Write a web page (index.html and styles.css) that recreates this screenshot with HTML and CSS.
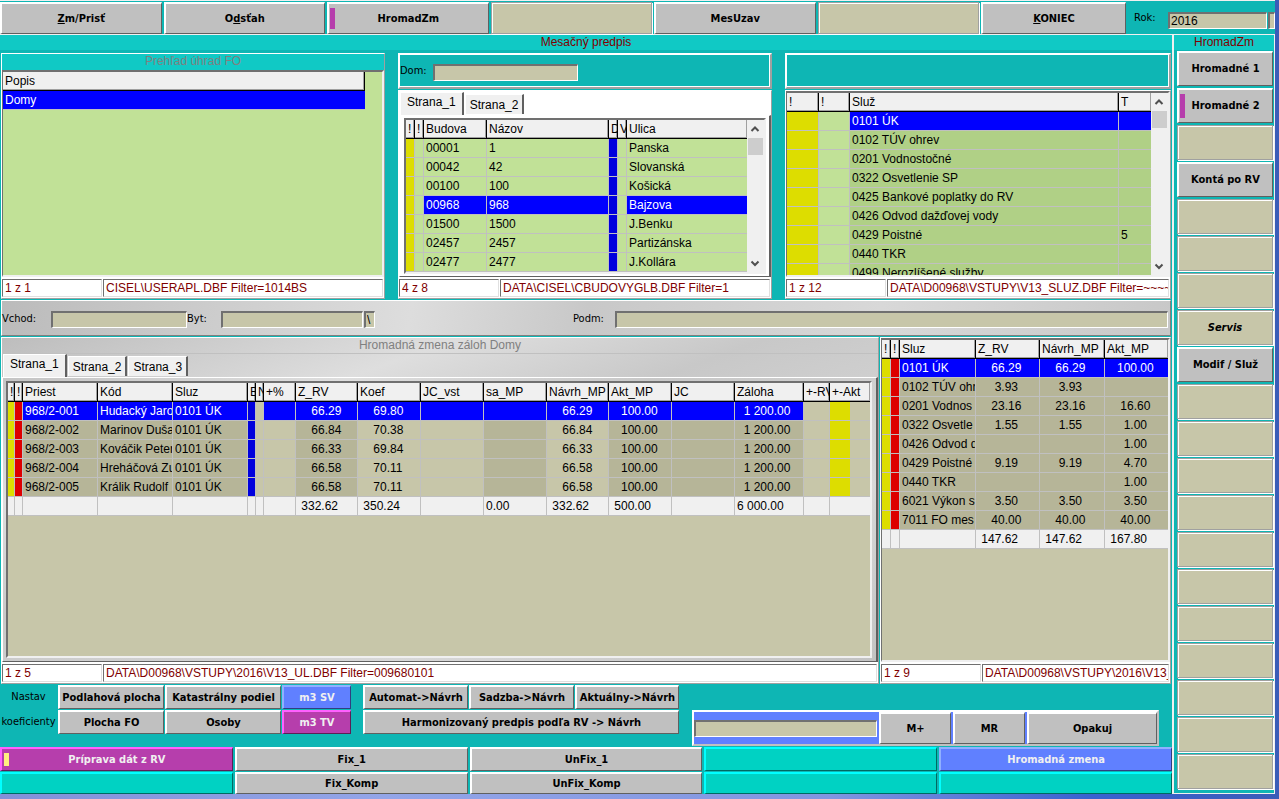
FILE: index.html
```html
<!DOCTYPE html>
<html lang="sk">
<head>
<meta charset="utf-8">
<title>Mesačný predpis</title>
<link rel="stylesheet" href="styles.css">
</head>
<body>
<div class="app">
  <header class="topbar">
    <nav class="menu">
      <button class="btn"><span><u>Z</u>m/Prisť</span></button>
      <button class="btn"><span>O<u>d</u>sťah</span></button>
      <button class="btn marked">HromadZm</button>
      <button class="slot" aria-label="Voľné"></button>
      <button class="btn">MesUzav</button>
      <button class="slot" aria-label="Voľné"></button>
    </nav>
    <button class="btn quit"><span><u>K</u>ONIEC</span></button>
    <div class="year">
      <label for="rok">Rok:</label>
      <input id="rok" class="field" value="2016">
      <input class="field tiny" aria-label="Mesiac">
    </div>
  </header>

  <main class="main">
    <h1 class="title">Mesačný predpis</h1>
    <div class="upper">
      <section class="panel teal-panel">
        <h2 class="caption teal">Prehľad úhrad FO</h2>
        <div class="grid green">
          <table class="t-popis">
            <thead><tr><th>Popis</th></tr></thead>
            <tbody><tr class="sel"><td>Domy</td></tr></tbody>
          </table>
        </div>
        <div class="status"><span>1 z 1</span><span>CISEL\USERAPL.DBF Filter=1014BS</span></div>
      </section>

      <section class="stack">
        <div class="box"><label for="dom">Dom:</label><input id="dom" class="field"></div>
        <div class="panel">
          <div class="tabs white"><button class="tab on">Strana_1</button><button class="tab">Strana_2</button></div>
          <div class="page light">
            <div class="grid green">
              <div class="clip">
              <table class="t-bud">
                <colgroup><col class="w9"><col class="w9"><col class="w63"><col class="w122"><col class="w9"><col class="w9"><col></colgroup>
                <thead><tr><th>!</th><th>!</th><th>Budova</th><th>Názov</th><th>D</th><th>V</th><th>Ulica</th></tr></thead>
                <tbody>
                  <tr><td class="y"></td><td></td><td>00001</td><td>1</td><td class="b"></td><td></td><td>Panska</td></tr>
                  <tr><td class="y"></td><td></td><td>00042</td><td>42</td><td class="b"></td><td></td><td>Slovanská</td></tr>
                  <tr><td class="y"></td><td></td><td>00100</td><td>100</td><td class="b"></td><td></td><td>Košická</td></tr>
                  <tr class="sel"><td class="y"></td><td class="n"></td><td>00968</td><td>968</td><td class="b"></td><td class="n"></td><td>Bajzova</td></tr>
                  <tr><td class="y"></td><td></td><td>01500</td><td>1500</td><td class="b"></td><td></td><td>J.Benku</td></tr>
                  <tr><td class="y"></td><td></td><td>02457</td><td>2457</td><td class="b"></td><td></td><td>Partizánska</td></tr>
                  <tr><td class="y"></td><td></td><td>02477</td><td>2477</td><td class="b"></td><td></td><td>J.Kollára</td></tr>
                </tbody>
              </table>
              </div>
              <div class="scroll">
                <svg viewBox="0 0 16 18"><path d="M4.500 11 8 7.500 11.500 11"/></svg><i></i>
                <svg viewBox="0 0 16 18"><path d="M4.500 7.500 8 11 11.500 7.500"/></svg>
              </div>
            </div>
          </div>
          <div class="status"><span>4 z 8</span><span>DATA\CISEL\CBUDOVYGLB.DBF Filter=1</span></div>
        </div>
      </section>

      <section class="stack">
        <div class="box"></div>
        <div class="panel">
          <div class="grid green">
            <div class="clip">
            <table class="t-sluz">
              <colgroup><col class="w32"><col class="w31"><col class="w269"><col></colgroup>
              <thead><tr><th>!</th><th>!</th><th>Služ</th><th>T</th></tr></thead>
              <tbody>
                <tr class="sel"><td class="y"></td><td class="n"></td><td>0101 ÚK</td><td></td></tr>
                <tr><td class="y"></td><td></td><td class="d">0102 TÚV ohrev</td><td class="d"></td></tr>
                <tr><td class="y"></td><td></td><td class="d">0201 Vodnostočné</td><td class="d"></td></tr>
                <tr><td class="y"></td><td></td><td class="d">0322 Osvetlenie SP</td><td class="d"></td></tr>
                <tr><td class="y"></td><td></td><td class="d">0425 Bankové poplatky do RV</td><td class="d"></td></tr>
                <tr><td class="y"></td><td></td><td class="d">0426 Odvod dažďovej vody</td><td class="d"></td></tr>
                <tr><td class="y"></td><td></td><td class="d">0429 Poistné</td><td class="d">5</td></tr>
                <tr><td class="y"></td><td></td><td class="d">0440 TKR</td><td class="d"></td></tr>
                <tr><td class="y"></td><td></td><td class="d">0499 Nerozlíšené služby</td><td class="d"></td></tr>
              </tbody>
            </table>
            </div>
            <div class="scroll">
              <svg viewBox="0 0 16 18"><path d="M4.500 11 8 7.500 11.500 11"/></svg><i></i>
              <svg viewBox="0 0 16 18"><path d="M4.500 7.500 8 11 11.500 7.500"/></svg>
            </div>
          </div>
          <div class="status"><span>1 z 12</span><span>DATA\D00968\VSTUPY\V13_SLUZ.DBF Filter=~~~~</span></div>
        </div>
      </section>
    </div>

    <form class="filter">
      <label for="vchod">Vchod:</label><input id="vchod" class="field f-vchod">
      <label for="byt">Byt:</label><input id="byt" class="field f-byt">
      <input class="field f-sep" aria-label="Oddeľovač" value="\">
      <label for="podm">Podm:</label><input id="podm" class="field f-podm">
    </form>

    <div class="lower">
      <section class="panel grey">
        <h2 class="caption">Hromadná zmena záloh Domy</h2>
        <div class="tabs"><button class="tab on">Strana_1</button><button class="tab">Strana_2</button><button class="tab">Strana_3</button></div>
        <div class="page">
          <div class="grid tan">
            <table class="t-zal">
              <colgroup><col class="w7"><col class="w8"><col class="w75"><col class="w75"><col class="w75"><col class="w8"><col class="w8"><col class="w32"><col class="w62"><col class="w63"><col class="w63"><col class="w63"><col class="w62"><col class="w63"><col class="w63"><col class="w69"><col class="w26"><col></colgroup>
              <thead><tr><th>!</th><th>!</th><th>Priest</th><th>Kód</th><th>Sluz</th><th>B</th><th>N</th><th>+%</th><th>Z_RV</th><th>Koef</th><th>JC_vst</th><th>sa_MP</th><th>Návrh_MP</th><th>Akt_MP</th><th>JC</th><th>Záloha</th><th>+-RV</th><th>+-Akt</th></tr></thead>
              <tbody>
                <tr class="sel"><td class="y"></td><td class="r"></td><td>968/2-001</td><td>Hudacký Jaro</td><td>0101 ÚK</td><td class="b"></td><td class="n"></td><td></td><td>    66.29</td><td>    69.80</td><td></td><td></td><td>    66.29</td><td>   100.00</td><td></td><td>  1 200.00</td><td class="n"></td><td class="flag"></td></tr>
                <tr><td class="y"></td><td class="r"></td><td class="d">968/2-002</td><td class="d">Marinov Duša</td><td class="d">0101 ÚK</td><td class="b"></td><td></td><td></td><td class="d">    66.84</td><td>    70.38</td><td></td><td class="d"></td><td>    66.84</td><td class="d">   100.00</td><td class="d"></td><td class="d">  1 200.00</td><td></td><td class="flag"></td></tr>
                <tr><td class="y"></td><td class="r"></td><td class="d">968/2-003</td><td class="d">Kováčik Peter</td><td class="d">0101 ÚK</td><td class="b"></td><td></td><td></td><td class="d">    66.33</td><td>    69.84</td><td></td><td class="d"></td><td>    66.33</td><td class="d">   100.00</td><td class="d"></td><td class="d">  1 200.00</td><td></td><td class="flag"></td></tr>
                <tr><td class="y"></td><td class="r"></td><td class="d">968/2-004</td><td class="d">Hreháčová Zu</td><td class="d">0101 ÚK</td><td class="b"></td><td></td><td></td><td class="d">    66.58</td><td>    70.11</td><td></td><td class="d"></td><td>    66.58</td><td class="d">   100.00</td><td class="d"></td><td class="d">  1 200.00</td><td></td><td class="flag"></td></tr>
                <tr><td class="y"></td><td class="r"></td><td class="d">968/2-005</td><td class="d">Králik Rudolf</td><td class="d">0101 ÚK</td><td class="b"></td><td></td><td></td><td class="d">    66.58</td><td>    70.11</td><td></td><td class="d"></td><td>    66.58</td><td class="d">   100.00</td><td class="d"></td><td class="d">  1 200.00</td><td></td><td class="flag"></td></tr>
              </tbody>
              <tfoot><tr><td></td><td></td><td></td><td></td><td></td><td></td><td></td><td></td><td> 332.62</td><td> 350.24</td><td></td><td>0.00</td><td> 332.62</td><td> 500.00</td><td></td><td>6 000.00</td><td></td><td></td></tr></tfoot>
            </table>
          </div>
        </div>
        <div class="status"><span>1 z 5</span><span>DATA\D00968\VSTUPY\2016\V13_UL.DBF Filter=009680101</span></div>
      </section>

      <section class="panel">
        <div class="grid tan">
          <table class="t-sum">
            <colgroup><col class="w9"><col class="w9"><col class="w76"><col class="w64"><col class="w65"><col></colgroup>
            <thead><tr><th>!</th><th>!</th><th>Sluz</th><th>Z_RV</th><th>Návrh_MP</th><th>Akt_MP</th></tr></thead>
            <tbody class="dark">
              <tr class="sel"><td class="y"></td><td class="r"></td><td>0101 ÚK</td><td>    66.29</td><td>    66.29</td><td>   100.00</td></tr>
              <tr><td class="y"></td><td class="r"></td><td>0102 TÚV ohr</td><td>     3.93</td><td>     3.93</td><td></td></tr>
              <tr><td class="y"></td><td class="r"></td><td>0201 Vodnos</td><td>    23.16</td><td>    23.16</td><td>    16.60</td></tr>
              <tr><td class="y"></td><td class="r"></td><td>0322 Osvetle</td><td>     1.55</td><td>     1.55</td><td>     1.00</td></tr>
              <tr><td class="y"></td><td class="r"></td><td>0426 Odvod d</td><td></td><td></td><td>     1.00</td></tr>
              <tr><td class="y"></td><td class="r"></td><td>0429 Poistné</td><td>     9.19</td><td>     9.19</td><td>     4.70</td></tr>
              <tr><td class="y"></td><td class="r"></td><td>0440 TKR</td><td></td><td></td><td>     1.00</td></tr>
              <tr><td class="y"></td><td class="r"></td><td>6021 Výkon s</td><td>     3.50</td><td>     3.50</td><td>     3.50</td></tr>
              <tr><td class="y"></td><td class="r"></td><td>7011 FO mes</td><td>    40.00</td><td>    40.00</td><td>    40.00</td></tr>
            </tbody>
            <tfoot><tr><td></td><td></td><td></td><td> 147.62</td><td> 147.62</td><td> 167.80</td></tr></tfoot>
          </table>
        </div>
        <div class="status"><span>1 z 9</span><span>DATA\D00968\VSTUPY\2016\V13_</span></div>
      </section>
    </div>

    <div class="tools">
      <div class="coef">
        <span>Nastav</span><button class="btn">Podlahová plocha</button><button class="btn">Katastrálny podiel</button><button class="btn blue">m3 SV</button>
        <span>koeficienty</span><button class="btn">Plocha FO</button><button class="btn">Osoby</button><button class="btn magenta">m3 TV</button>
      </div>
      <div class="calcs">
        <button class="btn">Automat-&gt;Návrh</button><button class="btn">Sadzba-&gt;Návrh</button><button class="btn">Aktuálny-&gt;Návrh</button>
        <button class="btn wide">Harmonizovaný predpis podľa RV -&gt; Návrh</button>
      </div>
      <div class="memory">
        <input class="field" aria-label="Hodnota">
        <button class="btn">M+</button><button class="btn">MR</button><button class="btn repeat">Opakuj</button>
      </div>
    </div>

    <div class="actions">
      <button class="btn magenta yellow-mark">Príprava dát z RV</button><button class="btn">Fix_1</button><button class="btn">UnFix_1</button><button class="btn cyan" aria-label="Voľné"></button><button class="btn blue">Hromadná zmena</button>
      <button class="btn cyan" aria-label="Voľné"></button><button class="btn">Fix_Komp</button><button class="btn">UnFix_Komp</button><button class="btn cyan" aria-label="Voľné"></button><button class="btn cyan" aria-label="Voľné"></button>
    </div>
  </main>

  <aside class="side">
    <h2 class="title">HromadZm</h2>
    <div class="side-list">
      <button class="btn">Hromadné 1</button>
      <button class="btn marked">Hromadné 2</button>
      <button class="slot" aria-label="Voľné"></button>
      <button class="btn">Kontá po RV</button>
      <button class="slot" aria-label="Voľné"></button>
      <button class="slot" aria-label="Voľné"></button>
      <button class="slot" aria-label="Voľné"></button>
      <button class="slot"><em>Servis</em></button>
      <button class="btn">Modif / Služ</button>
      <button class="slot" aria-label="Voľné"></button>
      <button class="slot" aria-label="Voľné"></button>
      <button class="slot" aria-label="Voľné"></button>
      <button class="slot" aria-label="Voľné"></button>
      <button class="slot" aria-label="Voľné"></button>
      <button class="slot" aria-label="Voľné"></button>
      <button class="slot" aria-label="Voľné"></button>
      <button class="slot" aria-label="Voľné"></button>
      <button class="slot" aria-label="Voľné"></button>
      <button class="slot" aria-label="Voľné"></button>
      <button class="slot" aria-label="Voľné"></button>
    </div>
  </aside>
</div>
</body>
</html>
```
FILE: styles.css
```css
* { box-sizing: border-box; }

body {
  margin: 0;
  height: 100vh;
  padding: 0 4px 5px 0;
  overflow: hidden;
  background: linear-gradient(to right, #8290d8, #93a5e8 30%, #8195e0 65%, #3a62d0 85%, #3a5cb8);
  font: 12px/16px "Liberation Sans", Arial, sans-serif;
  color: #000;
}

button, input { font: inherit; color: inherit; margin: 0; border-radius: 0; }
h1, h2 { margin: 0; font-size: 12px; font-weight: normal; }

.app {
  height: 100%;
  display: grid;
  grid-template-columns: minmax(0, 1fr) 103px;
  grid-template-rows: 35px minmax(0, 1fr);
  background: #0eb6b4;
}

/* Buttons */
.btn, .slot, .year label, .box label, .filter label, .coef span {
  font: 11px/14px "DejaVu Sans Condensed", "Noto Sans", sans-serif;
}
.btn, .slot {
  position: relative;
  min-width: 0;
  min-height: 0;
  padding: 0;
  font-weight: bold;
  white-space: nowrap;
}
.btn {
  background: #c0c0c0;
  border: solid;
  border-width: 2px 1px 1px 2px;
  border-color: #fff #606060 #606060 #fff;
}
.slot {
  background: #c7c6a9;
  border: 1px solid #a0a0a0;
  box-shadow: inset 1px 1px #fff, inset -1px -1px #c7c6a9, 1px 1px #fff;
}
.blue { background: #6080ff; border-color: #90b0ff #303f80 #303f80 #90b0ff; color: #f0f0f0; }
.magenta { background: #b63eac; border-color: #ff60ff #5b1f56 #5b1f56 #ff60ff; color: #f0f0f0; }
.cyan { background: #00d2c3; border-color: #00ffff #006961 #006961 #00ffff; }
.marked::before, .yellow-mark::before {
  content: "";
  position: absolute;
  left: 1px;
  top: 4px;
  bottom: 4px;
  width: 5px;
  background: #b63eac;
}
.yellow-mark::before { left: 2px; background: #ffef80; }

.field {
  min-width: 0;
  height: 17px;
  padding: 0 1px;
  background: #c7c6a9;
  border: 2px solid;
  border-color: #707070 #fff #fff #707070;
  border-right-width: 1px;
  border-bottom-width: 1px;
}

/* Top bar */
.topbar {
  grid-column: 1 / -1;
  display: flex;
  gap: 2px;
  padding-top: 1px;
  border-top: 1px solid #f0f0f0;
  border-bottom: 1px solid #f0f0f0;
}
.menu {
  flex: 1;
  display: grid;
  grid-template-columns: repeat(6, minmax(0, 1fr));
  gap: 2px;
}
.quit { width: 145px; }
.year { width: 147px; display: flex; align-items: center; padding-left: 6px; }
.year label { width: 34px; }
.year .field { flex: 1; margin-top: 4px; }
.year .tiny { flex: none; width: 7px; margin-left: 1px; }

/* Main column */
.main {
  display: grid;
  grid-template-rows: 16px minmax(0, 249fr) 36px minmax(0, 348fr) 63px 47px;
  min-width: 0;
}
.title {
  height: 15px;
  background: #10c9c5;
  color: #800000;
  text-align: center;
  line-height: 15px;
}

.upper {
  display: grid;
  grid-template-columns: 384fr 374fr 386fr;
  gap: 13px;
  padding: 2px 1px 1px;
}
.stack { display: flex; flex-direction: column; gap: 1px; min-width: 0; min-height: 0; }
.box {
  flex: none;
  height: 36px;
  display: flex;
  align-items: center;
  border: 2px solid;
  border-color: #fff #a0a0a0 #a0a0a0 #fff;
  box-shadow: inset -1px -1px #fff;
}
.box label { width: 33px; }
.box .field { width: 145px; margin-top: 2px; }

.panel {
  flex: 1;
  display: flex;
  flex-direction: column;
  min-width: 0;
  min-height: 0;
  background: #f0f0f0;
  border: 1px solid;
  border-color: #fff #a0a0a0 #a0a0a0 #fff;
}
.caption {
  flex: none;
  height: 16px;
  line-height: 15px;
  text-align: center;
  color: #808080;
  border-bottom: 1px solid #c0c0c0;
}
.caption.teal { background: #10c9c5; border-bottom: 0; }

.grey {
  background: linear-gradient(160deg, #bdbdbd, #dedede 25%, #c8c8c8 42%, #d8d8d8 70%, #c0c0c0);
}

/* Tabs */
.tabs { flex: none; display: flex; align-items: flex-start; gap: 1px; height: 23px; padding-left: 1px; }
.tabs.white { background: #fff; height: 24px; padding-top: 1px; }
.tab {
  height: 20px;
  margin-top: 2px;
  padding: 0 4px;
  background: #f0f0f0;
  border: solid;
  border-width: 1px 2px 0 1px;
  border-color: #fff #606060 #f0f0f0 #fff;
  font-size: 12px;
}
.tab.on { height: 23px; margin-top: 0; padding: 0 6px 4px; }

.page {
  flex: 1;
  display: flex;
  min-height: 0;
  padding: 3px 4px 3px 3px;
  border: 1px solid;
  border-color: #fff #606060 #606060 #fff;
  border-right-width: 2px;
}
.page.light { background: #fff; padding: 2px 3px 2px 4px; }

/* Data grids */
.grid {
  flex: 1;
  display: flex;
  align-items: flex-start;
  min-width: 0;
  min-height: 0;
  overflow: hidden;
  border: 2px solid;
  border-color: #707070 #f0f0f0 #f0f0f0 #707070;
}
.panel > .grid { border-left-width: 1px; }
.clip { flex: 1; min-width: 0; }
.green { background: #c1e197; --dark: #b0d086; --base: #c1e197; }
.tan { background: #c7c6a9; --dark: #b6b598; --base: #c7c6a9; }

table { width: 100%; table-layout: fixed; border-collapse: separate; border-spacing: 0; }
.t-popis { width: calc(100% - 17px); }
th, td {
  height: 19px;
  padding: 1px 0 0 2px;
  line-height: 17px;
  font-weight: normal;
  text-align: left;
  white-space: pre;
  overflow: hidden;
}
th {
  background: #f0f0f0;
  border-right: 1px solid #000;
  border-bottom: 1px solid #000;
  box-shadow: inset -1px -1px #a0a0a0;
}
td { border-right: 1px solid #c0c0c0; border-bottom: 1px solid #c0c0c0; }
tr > :last-child { border-right: 0; }
.t-popis th { border-right: 1px solid #000; }
.d, .dark td { background: var(--dark); }
tfoot td { background: #f0f0f0; }
tr.sel td { background: #0000ff; color: #fff; }
tbody tr td.n { background: var(--base); }
tbody tr td.y { background: #dddd00; }
tbody tr td.r { background: #dd0000; }
tbody tr td.b { background: #0000dd; }
tbody tr td.flag { background: linear-gradient(to right, #dddd00 20px, #c7c6a9 20px); }

.w7 { width: 7px; }
.w8 { width: 8px; }
.w9 { width: 9px; }
.w26 { width: 26px; }
.w31 { width: 31px; }
.w32 { width: 32px; }
.w62 { width: 62px; }
.w63 { width: 63px; }
.w64 { width: 64px; }
.w65 { width: 65px; }
.w69 { width: 69px; }
.w75 { width: 75px; }
.w76 { width: 76px; }
.w122 { width: 122px; }
.w269 { width: 269px; }

.scroll {
  align-self: stretch;
  width: 17px;
  flex: none;
  display: flex;
  flex-direction: column;
  background: #f0f0f0;
}
.scroll svg { width: 16px; height: 18px; fill: none; stroke: #505050; stroke-width: 2; }
.scroll i { height: 17px; margin: 0 1px; background: #cdcdcd; }
.scroll svg:last-child { margin-top: auto; }

.status { flex: none; display: flex; gap: 1px; padding: 2px 1px 1px 0; height: 21px; background: #fff; }
.status span {
  flex: 1;
  min-width: 0;
  padding-left: 2px;
  line-height: 17px;
  background: #fff;
  color: #800000;
  white-space: nowrap;
  overflow: hidden;
  border: 1px solid;
  border-color: #707070 #e0e0e0 #e0e0e0 #707070;
}
.status span:first-child { flex: none; width: 100px; }

/* Filter strip */
.filter {
  display: flex;
  align-items: center;
  margin: 0 1px;
  padding: 2px 2px 0 0;
  background: linear-gradient(100deg, #bbb, #ddd 35%, #c8c8c8 50%, #d8d8d8 75%, #c8c8c8);
  border: 1px solid;
  border-color: #fff #808080 #808080 #fff;
}
.filter label[for="vchod"] { width: 49px; }
.f-vchod { width: 136px; }
.filter label[for="byt"] { width: 34px; }
.f-byt { width: 142px; }
.f-sep { width: 11px; margin: 0 198px 0 1px; }
.filter label[for="podm"] { width: 42px; }
.f-podm { flex: 1; }

.lower {
  display: grid;
  grid-template-columns: 878fr 291fr;
  gap: 1px;
  padding: 1px 1px 0;
  min-height: 0;
}

/* Tool rows */
.tools { display: flex; align-items: flex-start; padding-top: 1px; }
.coef, .calcs { display: grid; grid-auto-rows: 24px; gap: 1px; flex: none; }
.coef { grid-template-columns: 57px 106px 116px 69px; align-items: stretch; }
.coef span { align-self: center; text-align: center; }
.calcs { grid-template-columns: 105px 105px 104px; margin-left: 12px; }
.calcs .wide { grid-column: 1 / -1; }
.memory {
  flex: 1;
  display: flex;
  gap: 2px;
  align-items: stretch;
  height: 36px;
  margin: 25px 13px 0 13px;
  background: #6080ff;
  border: 2px solid;
  border-color: #fff #c0c0c0 #c0c0c0 #fff;
}
.memory .field { flex: 1; align-self: center; }
.memory .btn { width: 72px; }
.memory .repeat { width: 130px; }

.actions {
  display: grid;
  grid-template-columns: repeat(5, minmax(0, 1fr));
  grid-template-rows: 24px 22px;
  gap: 1px 2px;
}

/* Side column */
.side {
  display: flex;
  flex-direction: column;
  min-height: 0;
  border-left: 2px solid #f0f0f0;
  border-right: 1px solid #f0f0f0;
  border-bottom: 1px solid #f0f0f0;
}
.side .title { flex: none; }
.side-list {
  flex: 1;
  display: grid;
  grid-template-rows: repeat(20, minmax(0, 1fr));
  gap: 2px;
  padding: 1px 1px 4px 3px;
  min-height: 0;
}
```
